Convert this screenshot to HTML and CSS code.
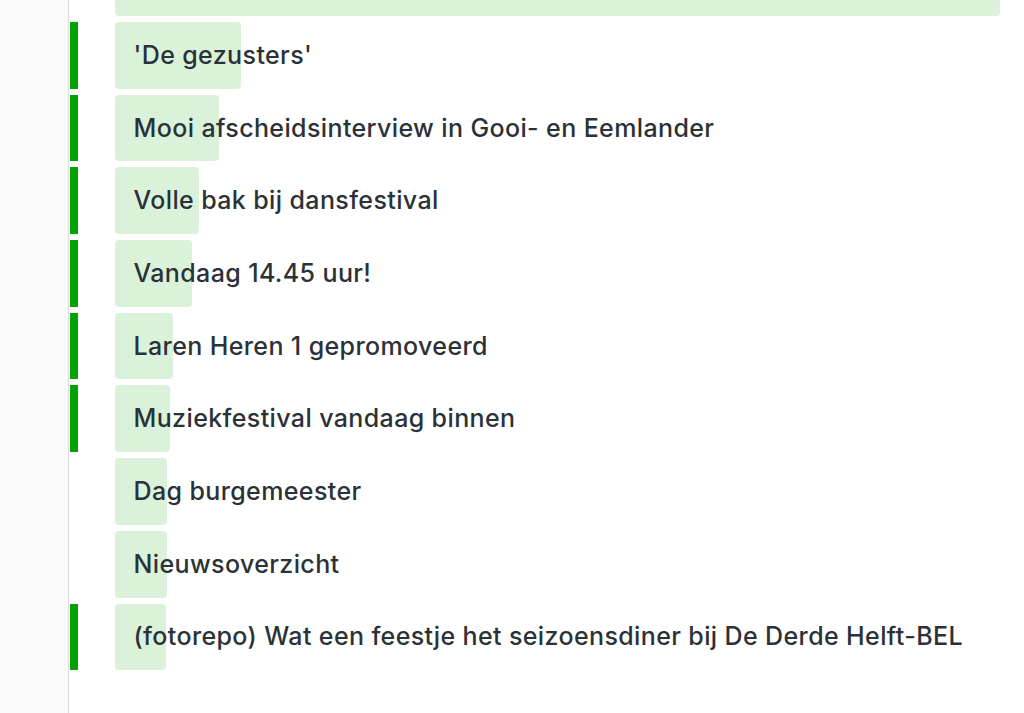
FILE: index.html
```html
<!DOCTYPE html>
<html lang="nl">
<head>
<meta charset="utf-8">
<title>Nieuws</title>
<link rel="stylesheet" href="styles.css">
</head>
<body>
<div class="page">
  <aside class="sidebar"></aside>
  <main class="main">
    <ul class="list">
      <li class="row"><span class="mark"></span><div class="item" style="--w:885px"><span class="title">&nbsp;</span></div></li>
      <li class="row on"><span class="mark"></span><div class="item" style="--w:126px"><span class="title">'De gezusters'</span></div></li>
      <li class="row on"><span class="mark"></span><div class="item" style="--w:104px"><span class="title">Mooi afscheidsinterview in Gooi- en Eemlander</span></div></li>
      <li class="row on"><span class="mark"></span><div class="item" style="--w:84px"><span class="title">Volle bak bij dansfestival</span></div></li>
      <li class="row on"><span class="mark"></span><div class="item" style="--w:77px"><span class="title">Vandaag 14.45 uur!</span></div></li>
      <li class="row on"><span class="mark"></span><div class="item" style="--w:58px"><span class="title">Laren Heren 1 gepromoveerd</span></div></li>
      <li class="row on"><span class="mark"></span><div class="item" style="--w:55px"><span class="title">Muziekfestival vandaag binnen</span></div></li>
      <li class="row"><span class="mark"></span><div class="item" style="--w:52px"><span class="title">Dag burgemeester</span></div></li>
      <li class="row"><span class="mark"></span><div class="item" style="--w:52px"><span class="title">Nieuwsoverzicht</span></div></li>
      <li class="row on"><span class="mark"></span><div class="item" style="--w:51px"><span class="title">(fotorepo) Wat een feestje het seizoensdiner bij De Derde Helft-BEL</span></div></li>
    </ul>
  </main>
</div>
</body>
</html>
```

FILE: styles.css
```css
html, body {
  margin: 0;
  padding: 0;
  background: #ffffff;
  height: 100%;
  overflow: hidden;
}
body {
  font-family: Inter, "Noto Sans", sans-serif;
  color: #2b3237;
}
.page {
  display: flex;
  height: 713px;
}
.sidebar {
  width: 68px;
  flex: none;
  background: #fafafa;
  border-right: 1.5px solid #dcdcdc;
}
.main {
  flex: 1;
  padding-left: 1px;
  padding-right: 24px;
}
.list {
  list-style: none;
  margin: -50.7px 0 0 0;
  padding: 0;
  display: flex;
  flex-direction: column;
  gap: 6px;
}
.row {
  display: flex;
  align-items: stretch;
  gap: 37px;
  height: 66.7px;
}
.mark {
  width: 7.5px;
  flex: none;
}
.row.on .mark {
  background: #04a104;
}
.item {
  flex: 1;
  position: relative;
  display: flex;
  align-items: center;
  padding-left: 19px;
}
.item::before {
  content: "";
  position: absolute;
  left: 0;
  top: 0;
  bottom: 0;
  width: var(--w);
  background: #dbf2da;
  border-radius: 4px;
}
.title {
  position: relative;
  font-size: 25px;
  font-weight: 500;
  letter-spacing: 0.38px;
  line-height: 1;
  white-space: nowrap;
}
```
